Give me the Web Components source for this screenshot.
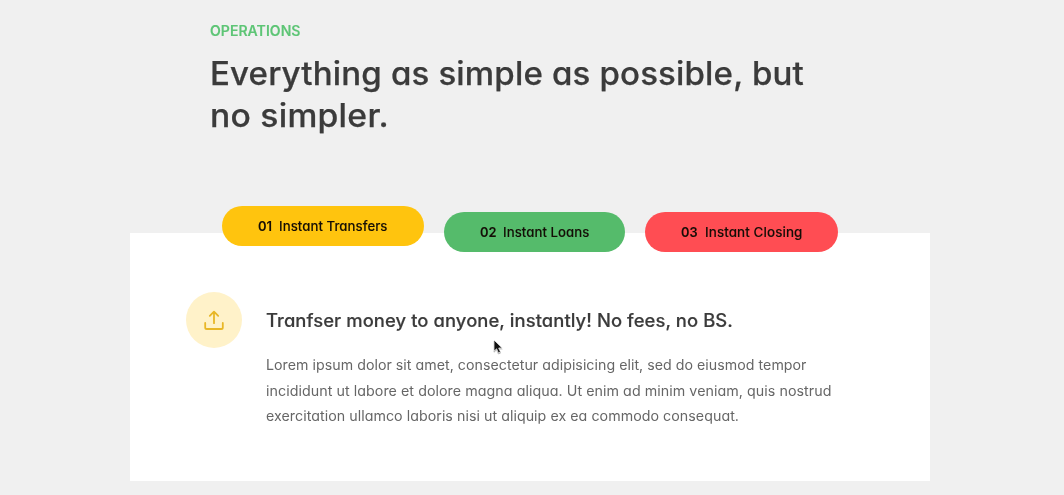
<!DOCTYPE html>
<html lang="en">
<head>
<meta charset="utf-8">
<title>Operations</title>
<style>
html, body { margin: 0; height: 495px; overflow: hidden; background: #f0f0f0; }
body { font-family: Inter, "Open Sans", sans-serif; color: #3b3b3b; font-feature-settings: "cv11"; }
</style>
</head>
<body>
<bank-operations></bank-operations>
<script>
/* One line of text, widened and tracked out to fill a given measure. */
class TextLine extends HTMLElement {
  constructor() {
    super();
    this.attachShadow({ mode: 'open' }).innerHTML = `
      <style>
        :host { display: block; white-space: nowrap; }
        span { display: inline-block; vertical-align: top; transform-origin: 0 0; }
      </style><span><slot></slot></span>`;
  }
  connectedCallback() {
    const span = this.shadowRoot.querySelector('span');
    const target = parseFloat(this.getAttribute('measure'));
    const natural = span.getBoundingClientRect().width;
    const n = this.textContent.length;
    const stretch = 1 + (target / natural - 1) * 0.75;
    this.style.width = target + 'px';
    span.style.letterSpacing = ((target / stretch - natural) / n).toFixed(4) + 'px';
    span.style.transform = `scaleX(${stretch.toFixed(4)})`;
  }
}

class SectionHeading extends HTMLElement {
  constructor() {
    super();
    this.attachShadow({ mode: 'open' }).innerHTML = `
      <style>
        :host { display: block; padding: 21.4px 0 0 80px; }
        h2 { margin: 0; font-size: 14px; line-height: 20px; font-weight: 600; color: #5ec576; -webkit-text-stroke: .12px; }
        h3 { margin: 11.8px 0 0; font-size: 32px; line-height: 41.6px; font-weight: 500; color: #3b3b3b; -webkit-text-stroke: .25px; }
      </style>
      <h2><text-line measure="90.5">OPERATIONS</text-line></h2>
      <h3><text-line measure="594">Everything as simple as possible, but</text-line>
      <text-line measure="179">no simpler.</text-line></h3>`;
  }
}

class OperationTab extends HTMLElement {
  constructor() {
    super();
    this.attachShadow({ mode: 'open' }).innerHTML = `
      <style>
        :host { display: block; flex: none; height: 40px; border-radius: 20px; background: var(--tab); }
        :host([active]) { margin-top: -6.4px; margin-bottom: 6.4px; }
        button { all: unset; box-sizing: border-box; display: flex; gap: 7px; height: 40px; padding-left: 36px;
          align-items: center; font-size: 13px; line-height: 20px; font-weight: 500; color: #140d06; -webkit-text-stroke: .08px; }
      </style>
      <button><slot name="number"></slot><slot></slot></button>`;
  }
}

class OperationIcon extends HTMLElement {
  constructor() {
    super();
    this.attachShadow({ mode: 'open' }).innerHTML = `
      <style>
        :host { display: flex; flex: none; width: 56px; height: 56px; border-radius: 50%; background: #fff2c9;
          align-items: center; justify-content: center; }
        svg { display: block; fill: none; stroke: #e8b727; stroke-width: 1.8; stroke-linecap: round; stroke-linejoin: round; }
      </style>
      <svg width="24" height="24" viewBox="0 0 24 24"><path d="M12 15.2V3.8M7.8 7.9L12 3.7 16.2 7.9M3.2 15v4.4a1.6 1.6 0 0 0 1.6 1.6h14.4a1.6 1.6 0 0 0 1.6-1.6V15"/></svg>`;
  }
}

class OperationContent extends HTMLElement {
  constructor() {
    super();
    this.attachShadow({ mode: 'open' }).innerHTML = `
      <style>
        :host { display: flex; gap: 24px; padding: 40.4px 0 0 56px; }
        h5 { margin: 14.6px 0 0; font-size: 18px; line-height: 28px; font-weight: 500; color: #3b3b3b; -webkit-text-stroke: .18px; }
        p { margin: 17.4px 0 0; font-size: 14px; line-height: 25.6px; font-weight: 400; color: #666; }
      </style>
      <operation-icon></operation-icon>
      <div>
        <h5><text-line measure="467">Tranfser money to anyone, instantly! No fees, no BS.</text-line></h5>
        <p><text-line measure="540.5">Lorem ipsum dolor sit amet, consectetur adipisicing elit, sed do eiusmod tempor</text-line>
        <text-line measure="565.5">incididunt ut labore et dolore magna aliqua. Ut enim ad minim veniam, quis nostrud</text-line>
        <text-line measure="473">exercitation ullamco laboris nisi ut aliquip ex ea commodo consequat.</text-line></p>
      </div>`;
  }
}

class MousePointer extends HTMLElement {
  constructor() {
    super();
    this.attachShadow({ mode: 'open' }).innerHTML = `
      <style>
        :host { position: absolute; left: 493px; top: 338.5px; width: 12px; height: 17px; }
        svg { display: block; filter: drop-shadow(0 1px .7px rgba(0,0,0,.35)); }
      </style>
      <svg width="12" height="17" viewBox="0 0 12 17"><path d="M1 1v11.2l2.6-2.4 1.8 4.2 2.1-.9-1.8-4.1h3.5z" fill="#111" stroke="#fff" stroke-width=".7"/></svg>`;
  }
}

class BankOperations extends HTMLElement {
  constructor() {
    super();
    this.attachShadow({ mode: 'open' }).innerHTML = `
      <style>
        :host { display: block; }
        main { width: 800px; margin-left: 130px; height: 495px; display: flex; flex-direction: column; }
        section-heading { height: 232.6px; box-sizing: border-box; flex: none; }
        .card { display: flow-root; height: 248.4px; background: #fff; flex: none; }
        nav { display: flex; gap: 20px; margin-top: -20.2px; padding-left: 92px; height: 39.4px; }
        [slot=number] { font-weight: 600; }
      </style>
      <main>
        <section-heading></section-heading>
        <div class="card">
          <nav>
            <operation-tab active style="--tab:#ffc40e;width:201.5px"><text-line slot="number" measure="14">01</text-line><text-line measure="108.5">Instant Transfers</text-line></operation-tab>
            <operation-tab style="--tab:#55bb6b;width:181.5px"><text-line slot="number" measure="16.5">02</text-line><text-line measure="86.5">Instant Loans</text-line></operation-tab>
            <operation-tab style="--tab:#ff4d53;width:193px"><text-line slot="number" measure="16.5">03</text-line><text-line measure="97.5">Instant Closing</text-line></operation-tab>
          </nav>
          <operation-content></operation-content>
        </div>
      </main>
      <mouse-pointer></mouse-pointer>`;
  }
}

customElements.define('section-heading', SectionHeading);
customElements.define('operation-tab', OperationTab);
customElements.define('operation-icon', OperationIcon);
customElements.define('operation-content', OperationContent);
customElements.define('mouse-pointer', MousePointer);
customElements.define('bank-operations', BankOperations);
/* Defined last: a line measures itself once its surroundings are laid out. */
customElements.define('text-line', TextLine);
</script>
</body>
</html>
